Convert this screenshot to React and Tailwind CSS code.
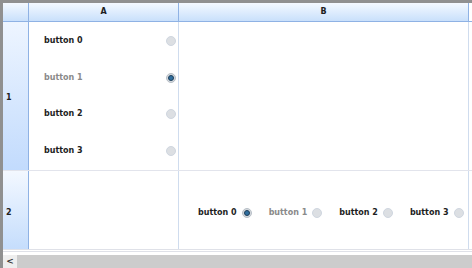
import React from "react";

const font = { fontFamily: '"DejaVu Sans", Verdana, sans-serif' };

function Radio({ checked }) {
  if (checked) {
    return (
      <span className="inline-flex h-[10px] w-[10px] items-center justify-center rounded-full bg-[#d4d8dc] border border-[#b8c0c8]">
        <span className="h-[6px] w-[6px] rounded-full bg-[#2f6f9f] border border-[#1d3e5a]" />
      </span>
    );
  }
  return <span className="inline-block h-[10px] w-[10px] rounded-full bg-[#dcdfe3] border border-[#cfd6e0]" />;
}

function Label({ children, disabled }) {
  return (
    <span className={"text-[8px] font-bold leading-none " + (disabled ? "text-[#8a8a8a]" : "text-[#1e1e1e]")}>
      {children}
    </span>
  );
}

export default function App() {
  const items = [0, 1, 2, 3];
  return (
    <div className="w-[472px] h-[268px] bg-[#909090] pl-[3px] pt-[3px] overflow-hidden" style={font}>
      <div className="flex h-full flex-col bg-white">
        {/* header */}
        <div className="flex h-[19px] border-b border-[#8fb2e4] bg-gradient-to-b from-[#f4f9ff] to-[#c9e0fb]">
          <div className="w-[26px] border-r border-[#8fb2e4]" />
          <div className="flex w-[150px] items-center justify-center border-r border-[#8fb2e4] text-[8px] font-bold text-[#1e1e1e]">A</div>
          <div className="flex w-[290px] items-center justify-center border-r border-[#8fb2e4] text-[8px] font-bold text-[#1e1e1e]">B</div>
          <div className="flex-1 bg-white" />
        </div>
        {/* row 1 */}
        <div className="flex h-[149px] border-b border-[#e2e4ec]">
          <div className="flex w-[26px] items-center border-r border-[#8fb2e4] bg-gradient-to-b from-[#eef5ff] to-[#c2dbfd] pl-[3px] pt-[3px] text-[8px] font-bold text-[#1e1e1e]">1</div>
          <div className="flex w-[150px] flex-col border-r border-[#cfdcee] pl-[15px] pt-[1px]">
            {items.map((i) => (
              <div key={i} className="flex h-[36.5px] items-center justify-between pr-[2px]">
                <Label disabled={i === 1}>button {i}</Label>
                <Radio checked={i === 1} />
              </div>
            ))}
          </div>
          <div className="w-[290px] border-r border-[#cfdcee]" />
          <div className="flex-1" />
        </div>
        {/* row 2 */}
        <div className="flex h-[81px] border-b-[3px] border-double border-[#dfe1e8]">
          <div className="flex w-[26px] items-center border-r border-[#8fb2e4] bg-gradient-to-b from-[#f3f8ff] to-[#c5ddfc] pl-[3px] pt-[5px] text-[8px] font-bold text-[#1e1e1e]">2</div>
          <div className="w-[150px] border-r border-[#cfdcee]" />
          <div className="flex w-[290px] items-center gap-[17px] border-r border-[#cfdcee] pl-[19px] pt-[5px]">
            {items.map((i) => (
              <div key={i} className="flex items-center gap-[5px]">
                <Label disabled={i === 1}>button {i}</Label>
                <Radio checked={i === 0} />
              </div>
            ))}
          </div>
          <div className="flex-1" />
        </div>
        {/* scrollbar */}
        <div className="mt-auto flex h-[13px] bg-[#cccccc]">
          <div className="flex w-[14px] items-center justify-center bg-[#eeeeee] text-[9px] font-bold text-[#333]">&lt;</div>
          <div className="flex-1" />
        </div>
      </div>
    </div>
  );
}
